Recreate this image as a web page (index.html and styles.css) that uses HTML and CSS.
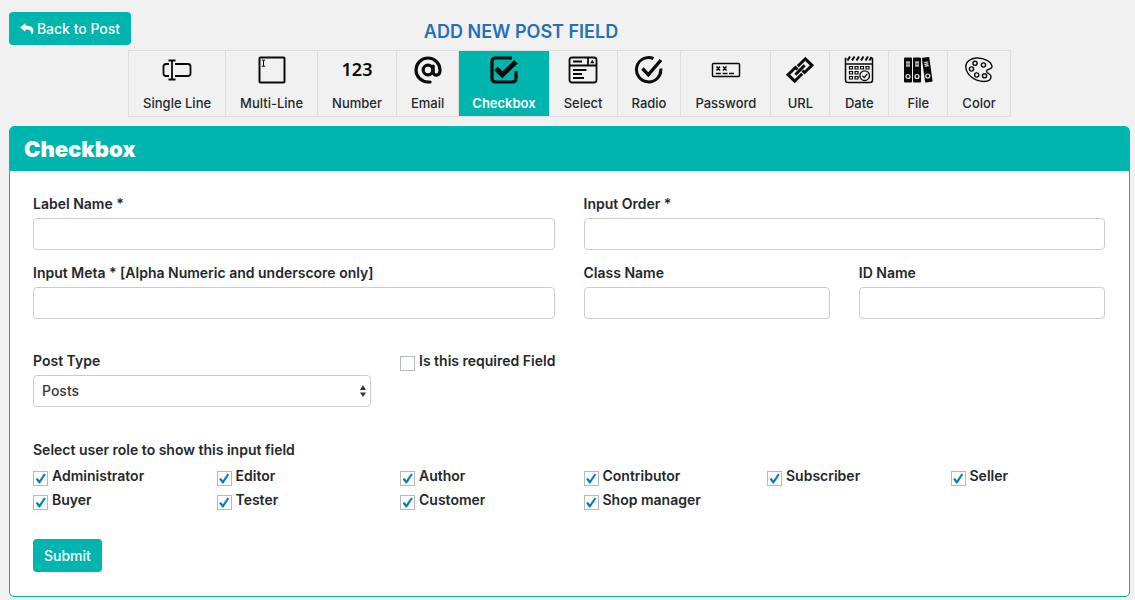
FILE: index.html
```html
<!DOCTYPE html>
<html lang="en">
<head>
<meta charset="utf-8">
<meta name="viewport" content="width=device-width, initial-scale=1">
<title>Add New Post Field</title>
<link rel="stylesheet" href="styles.css">
</head>
<body>
<main class="page">
  <header class="topbar">
    <a class="btn" href="#">
      <svg class="btn-icon" viewBox="0 0 14 12" aria-hidden="true"><path d="M5.400 0 0.200 4.400 5.400 8.800V6.400C9.500 6.300 11.800 7.400 11.600 12 15.200 7 13.800 2.600 5.400 2.400Z" fill="currentColor"/></svg>
      Back to Post
    </a>
    <h1 class="title">ADD NEW POST FIELD</h1>
  </header>

  <nav class="types" aria-label="Field types">
    <a class="type" href="#">
      <svg class="icon" viewBox="0 0 30 30" fill="none" stroke="currentColor" stroke-width="1.8" aria-hidden="true"><path d="M7 9H4Q1.500 9 1.500 11.500V18.500Q1.500 21 4 21H7M13 9H26Q28.500 9 28.500 11.500V18.500Q28.500 21 26 21H13M10 6V24M6.500 5.500H13.500M6.500 24.500H13.500"/></svg>
      Single Line
    </a>
    <a class="type" href="#">
      <svg class="icon" viewBox="0 0 30 30" fill="none" stroke="currentColor" aria-hidden="true"><rect x="2.500" y="2.500" width="25" height="25" rx="1" stroke-width="2"/><path d="M6.500 5.500V11M4.800 5.200H8.200M4.800 11.200H8.200" stroke-width="1"/></svg>
      Multi-Line
    </a>
    <a class="type" href="#">
      <span class="icon digits" aria-hidden="true">123</span>
      Number
    </a>
    <a class="type" href="#">
      <svg class="icon" viewBox="0 0 30 30" fill="none" stroke="currentColor" stroke-width="3.200" stroke-linecap="round" aria-hidden="true"><circle cx="15" cy="15" r="4.800"/><path d="M20.200 11V17C20.200 21.500 27 21.500 27 15A12 12 0 1 0 15 27H17"/></svg>
      Email
    </a>
    <a class="type type-active" href="#" aria-current="page">
      <svg class="icon" viewBox="0 0 30 30" fill="none" stroke="currentColor" aria-hidden="true"><path d="M23 3H6.500Q3 3 3 6.500V23.500Q3 27 6.500 27H23.500Q27 27 27 23.500V16" stroke-width="3.200"/><path d="M7 13.500 13.300 19.800 27 6.800" stroke-width="5"/></svg>
      Checkbox
    </a>
    <a class="type" href="#">
      <svg class="icon" viewBox="0 0 30 30" fill="none" stroke="currentColor" stroke-width="1.800" aria-hidden="true"><rect x="1.500" y="2.500" width="27" height="25" rx="2.500"/><path d="M1.500 10.500H28.500M20 2.500V10.500M5 6.500H14M5 15H18.500M5 19H14M5 23H16"/><path d="M22 8.300 24.300 4.800 26.500 8.300Z" fill="currentColor" stroke="none"/></svg>
      Select
    </a>
    <a class="type" href="#">
      <svg class="icon" viewBox="0 0 30 30" fill="none" stroke="currentColor" stroke-width="3" aria-hidden="true"><path d="M19.500 3.500A12.200 12.200 0 1 0 26.800 13.500"/><path d="M8.500 13.500 14.300 19.800 27 5" stroke-width="3.400"/></svg>
      Radio
    </a>
    <a class="type" href="#">
      <svg class="icon" viewBox="0 0 30 30" fill="none" stroke="currentColor" stroke-width="1.500" aria-hidden="true"><rect x="1.500" y="8.500" width="27" height="13" rx="1"/><path d="M5.500 11.500 9 15.500M9 11.500 5.500 15.500M12 11.500 15.500 15.500M15.500 11.500 12 15.500M4.800 18.500H9.800M11.500 18.500H16.500M18 18.500H23"/></svg>
      Password
    </a>
    <a class="type" href="#">
      <svg class="icon" viewBox="0 0 30 30" fill="none" stroke="currentColor" stroke-width="3" aria-hidden="true"><path d="M12.800 11.200 20.300 3.800 27 10.300 19.500 17.500 17.500 15.500M17.200 18.800 9.700 26.200 3 19.700 10.500 12.500 12.500 14.500M10.300 19.700 19.700 10.300"/></svg>
      URL
    </a>
    <a class="type" href="#">
      <svg class="icon" viewBox="0 0 30 30" fill="none" stroke="currentColor" stroke-width="1.500" aria-hidden="true"><path d="M2.500 3.500H1.500V25Q1.500 27.500 4 27.500H26Q28.500 27.500 28.500 25V3.500H27.500M1.500 9H28.500"/><path d="M3.500 5.500 6 1.500M8 5.500 10.500 1.500M12.500 5.500 15 1.500M17 5.500 19.500 1.500M21.500 5.500 24 1.500M25.500 5.500 27.500 2" stroke-width="2"/><path d="M5.500 11.500h3v2.500h-3zM11 11.500h3v2.500h-3zM16.500 11.500h3v2.500h-3zM22 11.500h3v2.500h-3zM5.500 16.500h3v2.500h-3zM11 16.500h3v2.500h-3zM5.500 21.500h3v2.500h-3zM11 21.500h3v2.500h-3z" stroke-width="1.200"/><circle cx="20.700" cy="20.700" r="4.800" stroke-width="1.300"/><path d="M18.300 20.800 20.200 22.600 23.200 19" stroke-width="1.200"/></svg>
      Date
    </a>
    <a class="type" href="#">
      <svg class="icon" viewBox="0 0 30 30" fill="currentColor" aria-hidden="true"><rect x="1" y="2.500" width="8" height="25" rx="1"/><rect x="10" y="2.500" width="8" height="25" rx="1"/><rect x="20.500" y="2.300" width="7.500" height="25" rx="1" transform="rotate(-8 24 15)"/><g fill="none" stroke="#f1f1f1" stroke-width="1.200"><path d="M3 7.200H7M3 9H7M3 10.800H7M12 7.200H16M12 9H16M12 10.800H16M21.300 7.500 25.200 7M21.500 9.300 25.400 8.800M21.700 11.100 25.600 10.600"/><circle cx="5" cy="21.500" r="2"/><circle cx="14" cy="21.500" r="2"/><circle cx="24.800" cy="21" r="2"/></g></svg>
      File
    </a>
    <a class="type" href="#">
      <svg class="icon" viewBox="0 0 30 30" fill="none" stroke="currentColor" stroke-width="1.400" aria-hidden="true"><path d="M12 3C5.500 3.500 1.500 7.500 1.800 12C2.300 20 11 26.500 20 26.500C25.500 26.500 27 24 27 21.500C27 18.500 22.500 18.800 22.500 16.200C22.500 13.500 28 15 28 11.500C27.500 7 20.500 2.500 12 3Z"/><circle cx="11" cy="8.300" r="2.100"/><circle cx="19.500" cy="10" r="2.100"/><circle cx="7.500" cy="14" r="2.100"/><circle cx="12.700" cy="20" r="2.100"/><circle cx="20.500" cy="20.800" r="2.100"/></svg>
      Color
    </a>
  </nav>

  <section class="panel">
    <h2 class="panel-title">Checkbox</h2>
    <form class="form">
      <div class="fields">
        <div class="field half">
          <label for="label-name">Label Name *</label>
          <input class="control" id="label-name" type="text">
        </div>
        <div class="field half">
          <label for="input-order">Input Order *</label>
          <input class="control" id="input-order" type="text">
        </div>
        <div class="field half">
          <label for="input-meta">Input Meta * [Alpha Numeric and underscore only]</label>
          <input class="control" id="input-meta" type="text">
        </div>
        <div class="field">
          <label for="class-name">Class Name</label>
          <input class="control" id="class-name" type="text">
        </div>
        <div class="field">
          <label for="id-name">ID Name</label>
          <input class="control" id="id-name" type="text">
        </div>
      </div>

      <div class="options">
        <div class="field">
          <label for="post-type">Post Type</label>
          <div class="select-wrap">
            <select class="control" id="post-type"><option>Posts</option></select>
            <svg class="arrows" viewBox="0 0 6 12" aria-hidden="true"><path d="M0 5 3 0 6 5ZM0 7.500 3 12 6 7.500Z" fill="currentColor"/></svg>
          </div>
        </div>
        <label class="check"><input type="checkbox">Is this required Field</label>
      </div>

      <fieldset class="roles">
        <legend>Select user role to show this input field</legend>
        <div class="role-grid">
          <label class="check"><input type="checkbox" checked>Administrator</label>
          <label class="check"><input type="checkbox" checked>Editor</label>
          <label class="check"><input type="checkbox" checked>Author</label>
          <label class="check"><input type="checkbox" checked>Contributor</label>
          <label class="check"><input type="checkbox" checked>Subscriber</label>
          <label class="check"><input type="checkbox" checked>Seller</label>
          <label class="check"><input type="checkbox" checked>Buyer</label>
          <label class="check"><input type="checkbox" checked>Tester</label>
          <label class="check"><input type="checkbox" checked>Customer</label>
          <label class="check"><input type="checkbox" checked>Shop manager</label>
        </div>
      </fieldset>

      <button class="btn" type="submit">Submit</button>
    </form>
  </section>
</main>
</body>
</html>
```

FILE: styles.css
```css
* {
  box-sizing: border-box;
}

body {
  margin: 0;
  background: #f1f1f1;
  color: #23282d;
  font: 600 14px/20px Inter, "Liberation Sans", sans-serif;
}

.page {
  padding: 12px 5px 3px 9px;
}

.topbar {
  display: grid;
  grid-template-columns: 122px 1fr 219px;
  align-items: center;
}

.title {
  margin: 0;
  padding-top: 6px;
  color: #2271b8;
  font-size: 18px;
  font-weight: 600;
  line-height: 24px;
  text-align: center;
}

.btn {
  display: inline-flex;
  align-items: center;
  justify-content: center;
  gap: 3px;
  height: 33px;
  padding: 0 11px;
  border: 0;
  border-radius: 4px;
  background: #00b5ad;
  color: #fff;
  font: 500 14px/20px Inter, "Liberation Sans", sans-serif;
  text-decoration: none;
  white-space: nowrap;
}

.btn-icon {
  flex: none;
  width: 14px;
  height: 12px;
}

.types {
  display: flex;
  justify-content: center;
  margin-top: 5px;
}

.type {
  display: flex;
  flex-direction: column;
  align-items: center;
  gap: 8px;
  padding: 4px 14px 3px;
  border: 1px solid #dedede;
  border-left-width: 0;
  color: #23282d;
  font-size: 13px;
  font-weight: 500;
  text-decoration: none;
  white-space: nowrap;
}

.type:first-child {
  border-left-width: 1px;
}

.type-active {
  padding: 4px 13px 3px;
  background: #00b5ad;
  color: #fff;
  font-weight: 600;
}

.icon {
  width: 30px;
  height: 30px;
  color: #0b0b0b;
}

.digits {
  display: flex;
  justify-content: center;
  font: 600 18px/28px "Noto Sans", sans-serif;
}

.panel {
  margin-top: 9px;
  border: 1px solid #00b5ad;
  border-radius: 5px;
  background: #fff;
  overflow: hidden;
}

.panel-title {
  margin: 0;
  padding: 8px 14px;
  background: #00b5ad;
  color: #fff;
  font-size: 22px;
  font-weight: 900;
  line-height: 28px;
}

.form {
  padding: 23px 24px 24px 23px;
}

.fields {
  display: grid;
  grid-template-columns: repeat(4, 1fr);
  gap: 13px 29px;
}

.half {
  grid-column: span 2;
}

.field {
  display: flex;
  flex-direction: column;
  gap: 4px;
}

.control {
  width: 100%;
  height: 32px;
  padding: 0 8px;
  border: 1px solid #ccc;
  border-radius: 4px;
  background: #fff;
  color: #32373c;
  font: 500 14px/20px Inter, "Liberation Sans", sans-serif;
  appearance: none;
}

.select-wrap {
  position: relative;
}

.arrows {
  position: absolute;
  top: 10px;
  right: 5px;
  width: 6px;
  height: 12px;
  color: #32373c;
  pointer-events: none;
}

.options {
  display: grid;
  grid-template-columns: repeat(3, 1fr);
  align-items: start;
  gap: 29px;
  margin-top: 32px;
}

.roles {
  margin: 33px 0 29px;
  padding: 0;
  border: 0;
}

.roles legend {
  padding: 0;
}

.role-grid {
  display: grid;
  grid-template-columns: repeat(6, 1fr);
  gap: 4px 29px;
  padding-top: 6px;
}

.check {
  display: flex;
  gap: 4px;
  white-space: nowrap;
}

.check input {
  display: grid;
  place-items: center;
  flex: none;
  width: 15px;
  height: 15px;
  margin: 5px 0 0;
  border: 1px solid #b4b9be;
  background: #fff;
  appearance: none;
}

.check input:checked::before {
  content: "";
  width: 11px;
  height: 11px;
  background: #0a7dbb;
  clip-path: polygon(5% 55%, 22% 45%, 40% 65%, 82% 5%, 98% 14%, 45% 96%, 34% 96%);
}
```
